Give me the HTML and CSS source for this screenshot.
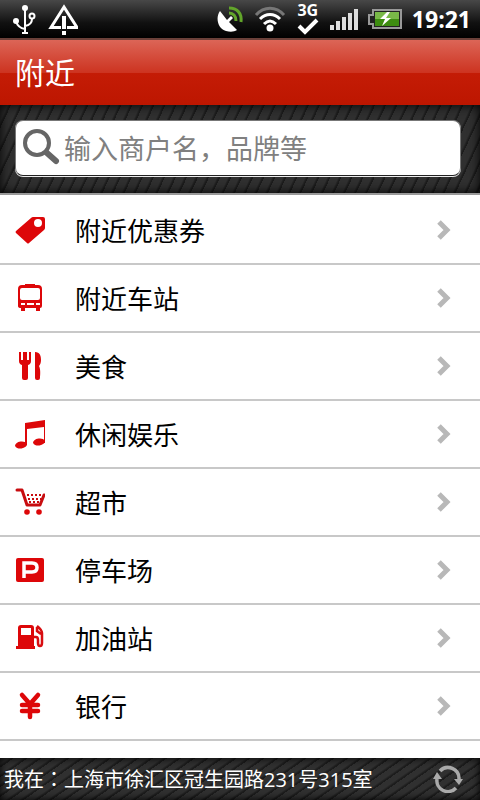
FILE: index.html
```html
<!DOCTYPE html>
<html lang="zh-CN">
<head>
<meta charset="utf-8">
<meta name="viewport" content="width=device-width, initial-scale=1">
<title>附近</title>
<link rel="stylesheet" href="styles.css">
</head>
<body>
<div class="status">
  <svg class="usb" width="24" height="32" viewBox="0 0 24 32" fill="none" stroke="#fff" stroke-width="2"><path d="M13 4v26M13 26C7 25 5 22 4 18M13 23c5-1 7-3 7-7"/><path d="M10 30h6"/><circle cx="13" cy="5" r="3" fill="#fff" stroke="none"/><circle cx="4" cy="18" r="3" fill="#fff" stroke="none"/><circle cx="20" cy="13" r="2.500"/></svg>
  <svg width="32" height="32" viewBox="0 0 32 32"><path d="M5 24.500L18 4l13 20.500z" fill="none" stroke="#fff" stroke-width="3"/><path d="M14 16h8v12h-8z" fill="#111"/><path d="M10 23h5v3h-5zM21 23h5v3h-5zM16 13h4v13h-4zM16 28h4v4h-4z" fill="#fff"/></svg>
  <span class="spacer"></span>
  <svg width="28" height="28" viewBox="0 0 28 28"><path d="M4 6C-1 13 2 24 10 26c4 1 8 1 11-1L13 17l4-4-2-2-4 4z" fill="#fff"/><path d="M13 8c4 0 7 3 7 8M13 3c8 0 13 5 12 14" fill="none" stroke="#62a52a" stroke-width="3"/></svg>
  <svg class="wifi" width="32" height="28" viewBox="0 0 32 28" fill="none" stroke="#fff" stroke-width="3"><path d="M2 10c8-9 20-9 28 0" stroke="#777"/><path d="M6 14c6-6 14-6 20 0M10 19c4-4 8-4 12 0"/><circle cx="16" cy="23" r="3.500" fill="#fff" stroke="none"/></svg>
  <span class="network"><span>3G</span><svg width="24" height="18" viewBox="0 0 24 18"><path d="M3 8l6 6L21 2" fill="none" stroke="#fff" stroke-width="4"/></svg></span>
  <svg class="signal" width="28" height="22" viewBox="0 0 28 22" fill="#ddd"><path d="M0 17h4v5H0zM6 13h4v9H6zM12 9h4v13h-4zM18 5h4v17h-4zM24 1h4v21h-4z"/></svg>
  <svg class="battery" width="34" height="20" viewBox="0 0 34 20"><path d="M5 1h28v18H5v-4H1V6h4z" fill="#222" stroke="#999" stroke-width="2"/><path d="M7 3h24v14H7z" fill="#3d8c10"/><path d="M7 3h24v7H7z" fill="#79b848"/><path d="M19 3l-7 7h5l-3 7 9-8h-5l4-6z" fill="#fff"/></svg>
  <time>19:21</time>
</div>
<header><h1>附近</h1></header>
<form class="search">
  <label class="field">
    <svg width="38" height="38" viewBox="0 0 38 38" fill="none" stroke="#666"><circle cx="15" cy="14" r="12" stroke-width="4"/><path d="M25 24l9 8" stroke-width="6" stroke-linecap="round"/></svg>
    <input type="text" aria-label="搜索" placeholder="输入商户名，品牌等">
  </label>
</form>
<nav><ul>
  <li><a href="#"><svg class="icon" viewBox="0 0 30 30"><path fill-rule="evenodd" d="M16 3q1-1 2-1h10q2 0 2 2v9q0 1-1 2L14 28q-1 1-2 0L1 18q-1-1 0-2zM23 4a4 4 0 1 0 0 8a4 4 0 1 0 0-8z"/></svg><span>附近优惠券</span><svg class="arrow" viewBox="0 0 14 22"><path d="M2 3l8 8-8 8"/></svg></a></li>
  <li><a href="#"><svg class="icon" viewBox="0 0 30 30"><path fill-rule="evenodd" d="M10 1h10v1h3q4 0 4 4v17q0 2-2 2v3h-4v-3H10v3H6v-3q-3 0-3-2V6q0-4 4-4h3zM7 5q-2 0-2 2v8q0 2 2 2h16q2 0 2-2V7q0-2-2-2zM6 20v2h4v-2zM12 20v2h7v-2zM21 20v2h4v-2z"/></svg><span>附近车站</span><svg class="arrow" viewBox="0 0 14 22"><path d="M2 3l8 8-8 8"/></svg></a></li>
  <li><a href="#"><svg class="icon" viewBox="0 0 30 30"><path d="M4 1h2v8h2V1h4v8h2V1h2v9q0 3-3 4v13q0 2-2 2H9q-2 0-2-2V14q-3-1-3-4zM20 1c5 0 6 4 6 8 0 3-1 5-2 6 2 4 1 10 1 12q0 2-2 2h-1q-2 0-2-2z"/></svg><span>美食</span><svg class="arrow" viewBox="0 0 14 22"><path d="M2 3l8 8-8 8"/></svg></a></li>
  <li><a href="#"><svg class="icon" viewBox="0 0 30 30"><path d="M10 4l20-3v23h-1V8L12 10v16h-2z"/><ellipse cx="6" cy="26" rx="6" ry="3.500" transform="rotate(-8 6 26)"/><ellipse cx="24" cy="23" rx="6" ry="3.500" transform="rotate(-8 24 23)"/></svg><span>休闲娱乐</span><svg class="arrow" viewBox="0 0 14 22"><path d="M2 3l8 8-8 8"/></svg></a></li>
  <li><a href="#"><svg class="icon" viewBox="0 0 30 30"><path d="M2 3h5l5 15h13l4-10" fill="none" stroke="#c80d10" stroke-width="3" stroke-linejoin="round" stroke-linecap="round"/><circle cx="12" cy="25" r="2.800"/><circle cx="24" cy="25" r="2.800"/><path d="M12 8h15M13 12h13M14 15h11" fill="none" stroke="#c80d10" stroke-width="2" stroke-dasharray="2 2"/></svg><span>超市</span><svg class="arrow" viewBox="0 0 14 22"><path d="M2 3l8 8-8 8"/></svg></a></li>
  <li><a href="#"><svg class="icon" viewBox="0 0 30 30"><rect x="1" y="3" width="28" height="24" rx="2"/><path d="M9 23V8h8q5 0 5 4.500T17 17H9" fill="none" stroke="#fff" stroke-width="3.500"/></svg><span>停车场</span><svg class="arrow" viewBox="0 0 14 22"><path d="M2 3l8 8-8 8"/></svg></a></li>
  <li><a href="#"><svg class="icon" viewBox="0 0 30 30"><path fill-rule="evenodd" d="M3 5q0-3 3-3h10q3 0 3 3v18h1v3H1v-3h2zM6 5v7h10V5z"/><path d="M19 14h2q2 0 2 3v3q0 3 2 3t2-3V10q0-3-5-7M22 4v4l4 3" fill="none" stroke="#d80d10" stroke-width="2.500"/></svg><span>加油站</span><svg class="arrow" viewBox="0 0 14 22"><path d="M2 3l8 8-8 8"/></svg></a></li>
  <li><a href="#"><svg class="icon" viewBox="0 0 30 30"><path d="M7 4l8 9 8-9M15 13v13M7 14h16M7 20h16" fill="none" stroke="#dd0709" stroke-width="4.500" stroke-linecap="round"/></svg><span>银行</span><svg class="arrow" viewBox="0 0 14 22"><path d="M2 3l8 8-8 8"/></svg></a></li>
</ul></nav>
<footer>
  <p>我在<span class="colon" lang="zh-Hant">：</span>上海市徐汇区冠生园路231号315室</p>
  <button type="button" aria-label="刷新"><svg width="30" height="28" viewBox="0 0 30 28"><path d="M7 6a11 11 0 0 1 19 8M23 23a11 11 0 0 1-19-9" fill="none" stroke="#aaa" stroke-width="3.500"/><path d="M21 14h9l-4 6zM0 14h9L4 7z" fill="#aaa"/></svg></button>
</footer>
</body>
</html>
```

FILE: styles.css
```css
* { box-sizing: border-box; margin: 0; padding: 0; }
body {
  display: flex;
  flex-direction: column;
  min-height: 100vh;
  background: #fff;
  color: #000;
  font-family: "Open Sans", "Noto Sans CJK SC", sans-serif;
}
.status {
  display: flex;
  align-items: center;
  gap: 10px;
  height: 38px;
  padding: 0 9px 0 12px;
  background: linear-gradient(#484848, #111 60%, #000);
  color: #fff;
}
.status svg { flex: none; }
.spacer { flex: 1; }
.network { display: flex; flex-direction: column; align-items: center; font: bold 16px/16px "Open Sans", sans-serif; }
.status time { font-size: 23px; line-height: 32px; font-weight: 700; }
header {
  height: 67px;
  padding: 0 15px;
  border-top: 2px solid #6b4039;
  background: linear-gradient(#dc6557, #cd3421 50%, #c41c06 51%, #bd1600);
  color: #fff;
}
h1 { font-size: 30px; line-height: 66px; font-weight: 400; }
.search {
  padding: 15px 19px 17px 15px;
  border-bottom: 2px solid #999;
  background: repeating-linear-gradient(115deg, #303030 0 7px, #1c1c1c 9px 10px);
  box-shadow: inset 0 0 12px #000;
}
.field {
  display: flex;
  align-items: center;
  height: 56px;
  padding: 0 6px;
  border: 1px solid #777;
  border-bottom-color: #222;
  border-radius: 8px;
  background: #fff;
  box-shadow: 0 1px #eee;
}
.field svg { flex: none; }
.field input {
  flex: 1;
  min-width: 0;
  margin-left: 4px;
  border: 0;
  outline: 0;
  background: transparent;
  font: 27px/40px "Noto Sans CJK SC", sans-serif;
}
.field input::placeholder { color: #808080; opacity: 1; }
nav { flex: 1; padding-top: 2px; }
ul { list-style: none; }
li { border-bottom: 2px solid #c8c8c8; }
li a {
  display: flex;
  align-items: center;
  height: 66px;
  padding: 0 29px 0 15px;
  color: inherit;
  font-size: 26px;
  line-height: 40px;
  text-decoration: none;
}
li span { flex: 1; margin-left: 30px; padding-top: 2px; }
.icon { width: 30px; height: 30px; fill: #dd0709; }
.arrow { width: 14px; height: 22px; fill: none; stroke: #b8b8b8; stroke-width: 5; }
footer {
  display: flex;
  align-items: center;
  justify-content: space-between;
  height: 42px;
  padding: 0 17px 0 4px;
  background: repeating-linear-gradient(145deg, #303030 0 5px, #1c1c1c 7px 8px);
  box-shadow: inset 0 0 8px #000;
  color: #fff;
  font-size: 20px;
  line-height: 30px;
}
.colon { font-family: "Noto Sans CJK TC", sans-serif; }
button { display: flex; border: 0; background: none; }
```
